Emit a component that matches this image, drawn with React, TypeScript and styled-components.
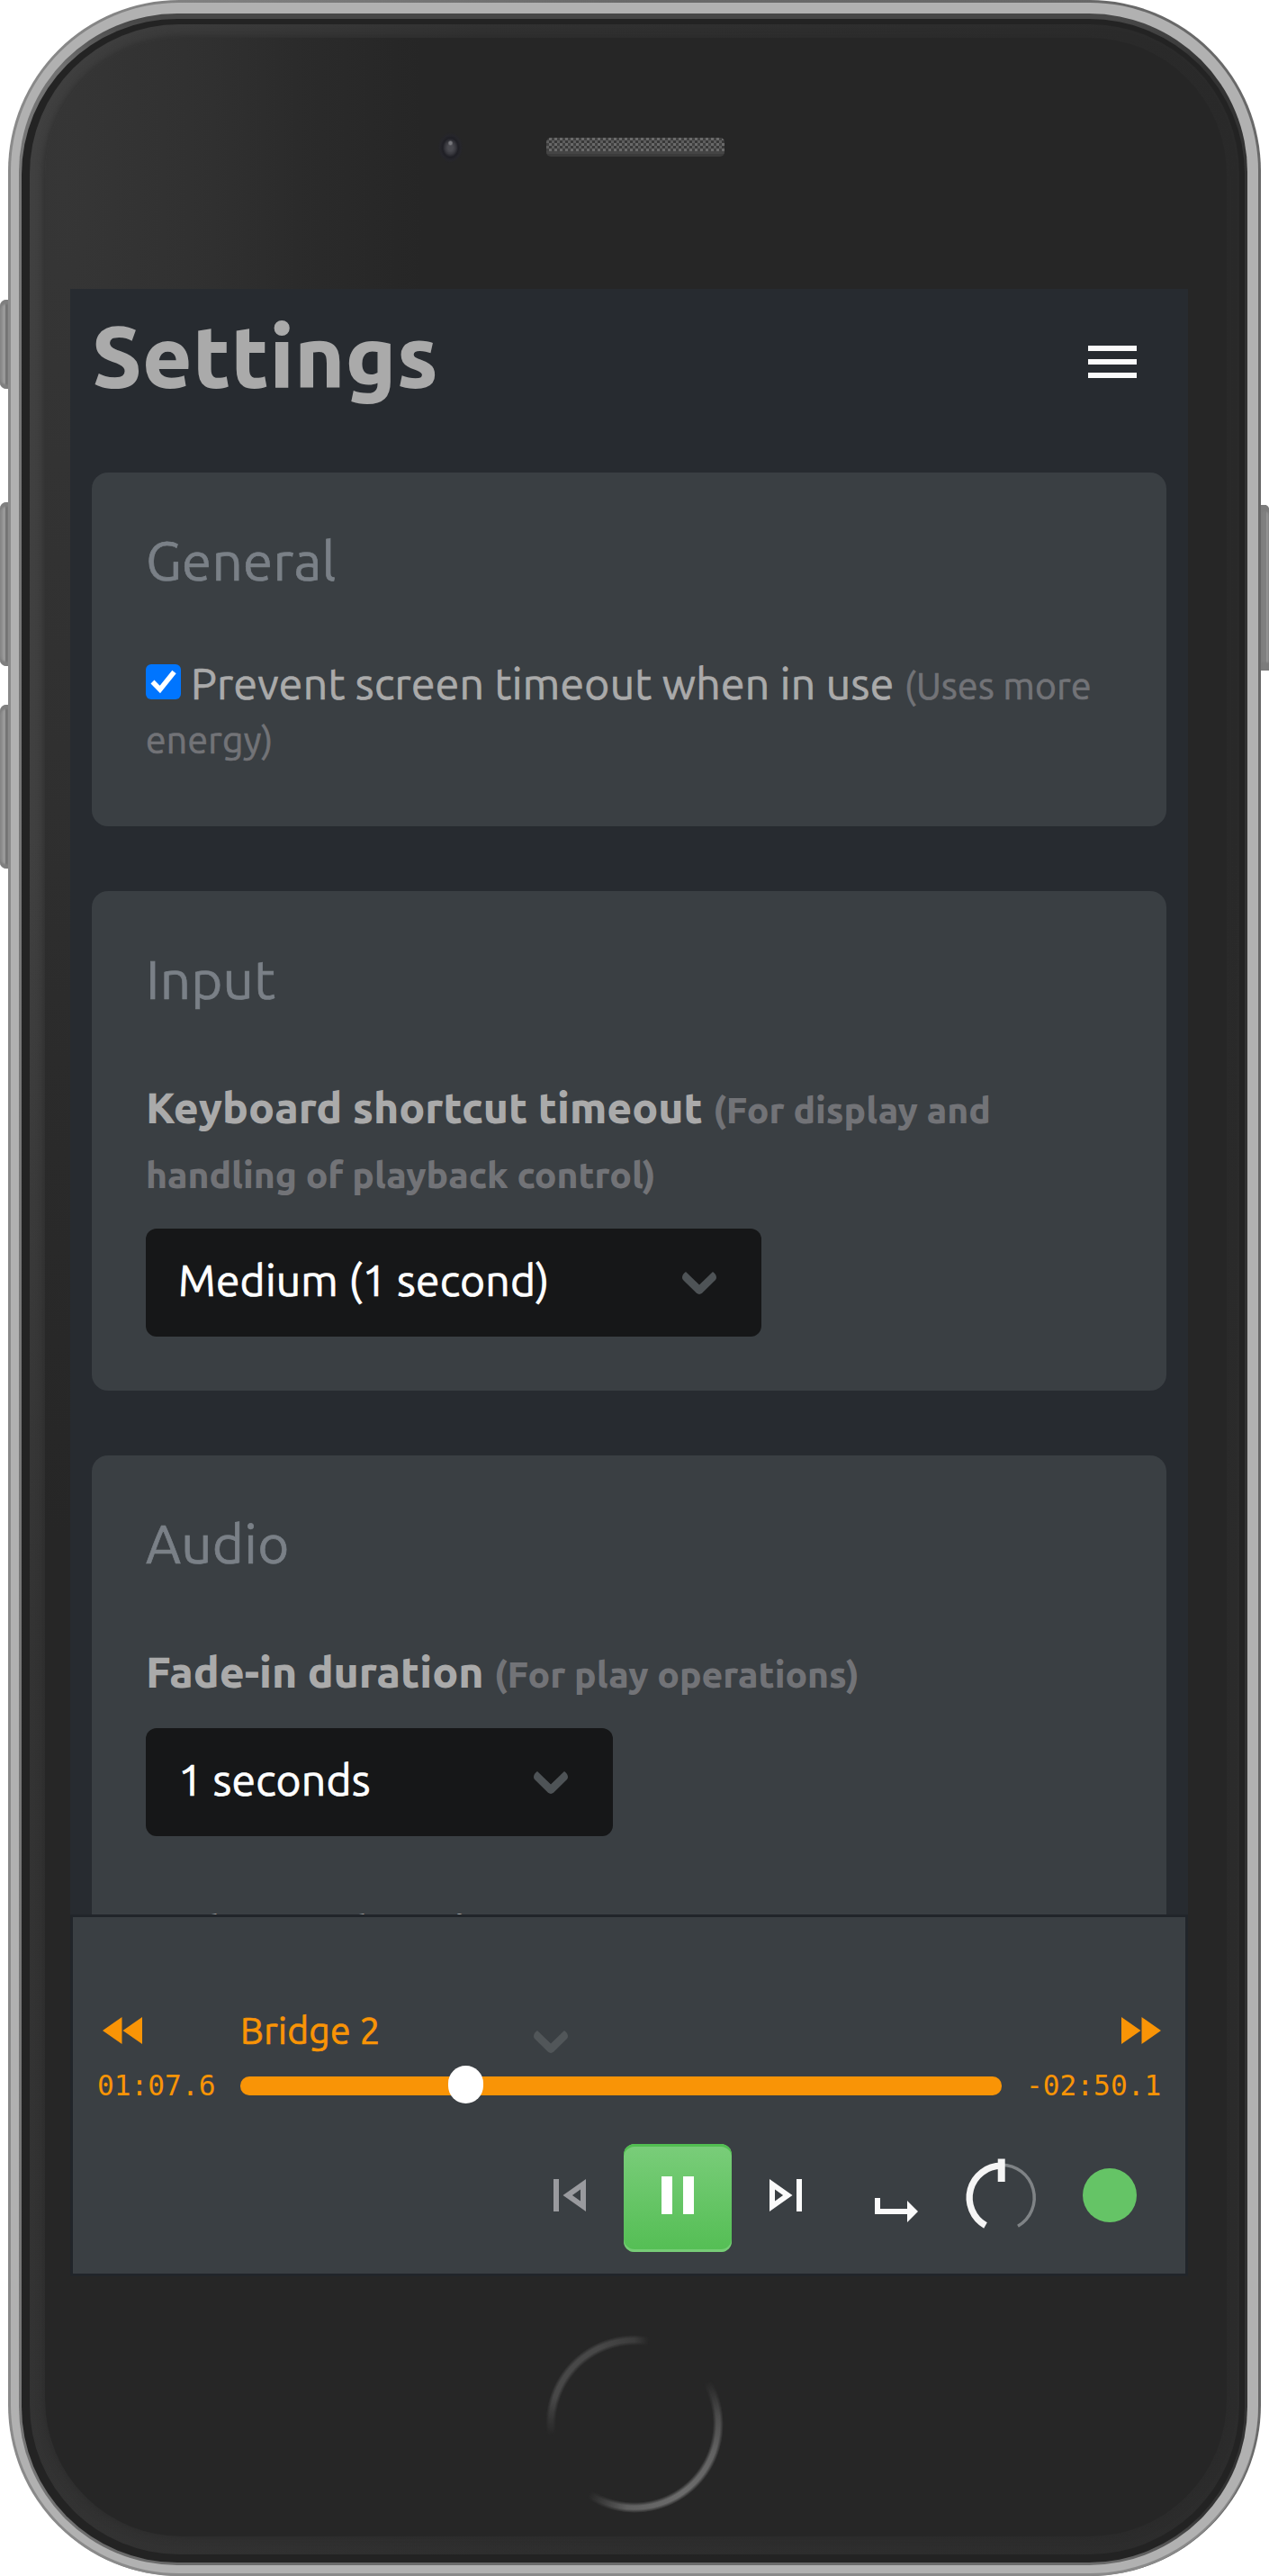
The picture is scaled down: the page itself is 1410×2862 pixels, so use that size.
import React from 'react';
import styled, { createGlobalStyle, css } from 'styled-components';

const uiFont = "Ubuntu, 'Noto Sans', 'Open Sans', sans-serif";
const orange = '#f99406';
const panel = '#3a3f43';

const GlobalStyle = createGlobalStyle`
  *, *::before, *::after { box-sizing: border-box; }
  body { margin: 0; background: #fff; }
`;

/* ---------- device ---------- */

const Stage = styled.div`
  display: grid;
  grid-template-columns: 9px 1392px 9px;
  width: 1410px;
  height: 2862px;
  overflow: hidden;
`;

const SideRail = styled.div<{ $top: number }>`
  display: flex;
  flex-direction: column;
  padding-top: ${(p) => p.$top}px;
`;

const SideButton = styled.div<{ $height: number; $before?: number; $side: 'left' | 'right' }>`
  height: ${(p) => p.$height}px;
  margin-top: ${(p) => p.$before ?? 0}px;
  ${(p) =>
    p.$side === 'left'
      ? css`
          border-radius: 7px 0 0 7px;
          background: linear-gradient(90deg, #8f8f8f 0 3px, #999 3px 6px, #747474 6px);
          box-shadow: inset 0 5px 2px #7f7f7f, inset 0 -5px 2px #7f7f7f;
        `
      : css`
          border-radius: 0 5px 0 0;
          background: linear-gradient(90deg, #808080 0 6px, #949494 6px);
          box-shadow: inset 0 7px 2px #7c7c7c, inset 0 -9px 2px #7c7c7c;
        `}
`;

const Edge = styled.div`
  height: 2862px;
  padding: 3px;
  border-radius: 190px;
  background: linear-gradient(90deg, #8a8a8a 0 3px, #696969 50%, #686868);
`;

const Metal = styled.div`
  height: 2856px;
  padding: 12px 12px 9px 9px;
  border-radius: 187px;
  background: #b1b1b1;
  box-shadow: 0 3px 0 #8a8a8a;
`;

const Lip = styled.div`
  height: 2835px;
  padding: 6px 3px 3px 3px;
  border-radius: 176px;
  background: linear-gradient(180deg, #474747 0, #474747 6px, transparent 60px, transparent 2780px, #6a6a6a 2832px),
    linear-gradient(90deg, #767676, #333 60%);
`;

const Glass = styled.div`
  height: 2826px;
  padding: 6px 6px 9px 9px;
  border-radius: 173px;
  background: #232323;
`;

const Rim = styled.div`
  height: 2811px;
  padding: 15px 14px 20px 17px;
  border-radius: 166px;
  background: linear-gradient(180deg, transparent 900px, rgba(45, 45, 45, 0.7) 1800px),
    linear-gradient(90deg, #404040 0, #313131 500px, #2a2a2a 100%);
`;

const Face = styled.div`
  display: flex;
  flex-direction: column;
  height: 2776px;
  border-radius: 152px;
  background: radial-gradient(ellipse 400px 1500px at 20px 160px, #363636 0, #303030 42%, #2b2b2b 65%, #262626 100%);
  box-shadow: 0 0 8px 1px rgba(42, 42, 42, 0.9);
`;

const TopBezel = styled.div`
  display: flex;
  align-items: center;
  gap: 91px;
  height: 279px;
  padding: 0 0 36px 435px;
`;

const Camera = styled.div`
  width: 31px;
  height: 42px;
  border-radius: 50%;
  background: radial-gradient(circle at 50% 38%, #77777c 0 1.5px, transparent 3px),
    radial-gradient(ellipse 14px 17px at 50% 50%, #4a4a50 0 20%, #38383e 42%, #1f1f25 62%, #26262b 82%, transparent 100%);
`;

const Earpiece = styled.div`
  width: 198px;
  height: 21px;
  border-radius: 5px;
  background: linear-gradient(180deg, transparent 15px, #454545 15px 18px, #3b3b3b 18px),
    conic-gradient(#6a6a6a 25%, #383838 0 50%, #5d5d5d 0 75%, #404040 0) 0 0 / 6px 6px;
`;

const BottomBezel = styled.div`
  display: flex;
  justify-content: center;
  padding: 65px 3px 0 0;
`;

const HomeButton = styled.div`
  width: 198px;
  height: 198px;
  border-radius: 50%;
  background: conic-gradient(
    #3c3c3c 0deg,
    transparent 10deg 60deg,
    #4c4c4c 85deg,
    #626262 110deg,
    #6c6c6c 145deg,
    #606060 185deg,
    transparent 213deg 262deg,
    #484848 288deg,
    #484848 335deg,
    #3c3c3c 360deg
  );
  mask: radial-gradient(circle, transparent 87px, #000 91px 95px, transparent 99px);
`;

/* ---------- app ---------- */

const Screen = styled.main`
  position: relative;
  flex: none;
  width: 1242px;
  height: 2208px;
  margin-left: 28px;
  padding: 0 24px;
  overflow: hidden;
  background: #272b30;
  color: #aaa;
  font: 400 48px/60px ${uiFont};
  letter-spacing: 0.3px;
  -webkit-text-stroke: 0.7px;
`;

const Header = styled.header`
  display: flex;
  align-items: center;
  justify-content: space-between;
  height: 204px;
  padding-right: 33px;
`;

const Title = styled.h1`
  margin: 0 0 54px;
  font-size: 96px;
  line-height: 144px;
  font-weight: 800;
  letter-spacing: 0;
  -webkit-text-stroke: 0;
`;

const MenuButton = styled.button`
  display: grid;
  gap: 9px;
  width: 54px;
  margin: 0 0 42px;
  padding: 0;
  border: 0;
  background: none;
`;

const MenuBar = styled.span`
  height: 6px;
  background: #fafafa;
`;

const Sections = styled.div`
  display: grid;
  gap: 72px;
`;

const Card = styled.section`
  padding: 53px 60px 60px;
  border-radius: 18px;
  background: ${panel};
`;

const CardTitle = styled.h2`
  margin: 0 0 61px;
  color: #7a8087;
  font-size: 60px;
  line-height: 90px;
  font-weight: 400;
`;

const CheckLabel = styled.label`
  display: block;
  margin-bottom: 9px;
`;

const CheckBox = styled.svg`
  width: 39px;
  height: 39px;
  margin-right: 11px;
  vertical-align: 0;
`;

const Hint = styled.small`
  color: #727377;
  font-size: 40.8px;
  line-height: 1;
`;

const Label = styled.label`
  display: block;
  margin-bottom: 27px;
  font-weight: 800;
  line-height: 72px;
  letter-spacing: -0.04px;
  -webkit-text-stroke: 0;
`;

const Field = styled.div`
  & + & { margin-top: 69px; }
`;

const SelectBox = styled.div<{ $width: number }>`
  display: flex;
  align-items: center;
  justify-content: space-between;
  width: ${(p) => p.$width}px;
  height: 120px;
  padding: 0 50px 0 36px;
  border-radius: 12px;
  background: #161718;
  color: #fff;
`;

const SelectValue = styled.span`
  flex: 1;
  padding-bottom: 6px;
  letter-spacing: 0.2px;
`;

const ChevronSvg = styled.svg`
  position: relative;
  z-index: 2;
  width: 38px;
  height: 25px;
  fill: #53585b;
  opacity: 0.93;
`;

/* ---------- player ---------- */

const Player = styled.footer`
  position: absolute;
  z-index: 1;
  left: 0;
  right: 0;
  bottom: 0;
  height: 402px;
  padding: 102px 27px 0;
  border: 3px solid #21252a;
  background: ${panel};
`;

const Timeline = styled.div`
  display: grid;
  grid-template-columns: 132px 846px 150px;
  grid-template-rows: 48px 37px;
  gap: 19px 27px;
  align-items: center;
  color: ${orange};
`;

const SeekIcon = styled.svg<{ $end?: boolean }>`
  width: 44px;
  height: 30px;
  fill: ${orange};
  justify-self: ${(p) => (p.$end ? 'end' : 'start')};
  margin-left: ${(p) => (p.$end ? 0 : 6)}px;
`;

const SectionName = styled.span`
  font-size: 40.8px;
  line-height: 48px;
`;

const Time = styled.span`
  font: 31.2px/37px 'DejaVu Sans Mono', monospace;
  letter-spacing: 0;
  white-space: nowrap;
  -webkit-text-stroke: 0;
`;

const Track = styled.div`
  display: flex;
  align-items: center;
  height: 21px;
  padding-left: 231px;
  border-radius: 10px;
  background: ${orange};
`;

const Thumb = styled.span`
  width: 39px;
  height: 42px;
  margin-bottom: 3px;
  border-radius: 19.5px;
  background: #fff;
`;

const Controls = styled.div`
  display: flex;
  justify-content: flex-end;
  margin: 46px -3px 0 0;
`;

const ControlButton = styled.button<{ $primary?: boolean; $dim?: boolean }>`
  display: flex;
  align-items: center;
  justify-content: center;
  width: 120px;
  height: 120px;
  padding: 0 0 6px;
  border: 0;
  background: none;
  color: ${(p) => (p.$dim ? '#999a9e' : '#fafafa')};
  ${(p) =>
    p.$primary &&
    css`
      border-radius: 12px;
      background: linear-gradient(#7acd7a, #54be54);
      box-shadow: inset 0 3px #52be52, inset 0 -3px #77cc77;
      color: #fff;
    `}
`;

const Icon = styled.svg`
  flex: none;
  width: 72px;
  height: 72px;
  fill: currentColor;
`;

const DialIcon = styled.svg`
  flex: none;
  width: 90px;
  height: 90px;
  fill: none;
`;

const StatusDot = styled.span`
  width: 60px;
  height: 60px;
  border-radius: 50%;
  background: #65c466;
`;

function Chevron() {
  return (
    <ChevronSvg viewBox="0 0 38 25">
      <path d="M4 0L19 14.5 34 0C38 3 39 6.5 37 9L22 23.8Q19 26 16 23.8L1 9C-1 6.5 0 3 4 0Z" />
    </ChevronSvg>
  );
}

function Select({ width, children }: { width: number; children?: React.ReactNode }) {
  return (
    <SelectBox $width={width}>
      <SelectValue>{children}</SelectValue>
      <Chevron />
    </SelectBox>
  );
}

function PlayerBar() {
  return (
    <Player>
      <Timeline>
        <SeekIcon viewBox="0 0 44 30">
          <path d="M21.5 0V30L0 15ZM44 0V30L22.5 15Z" />
        </SeekIcon>
        <SectionName>Bridge 2</SectionName>
        <SeekIcon $end viewBox="0 0 44 30">
          <path d="M0 0V30L21.5 15ZM22.5 0V30L44 15Z" />
        </SeekIcon>
        <Time>01:07.6</Time>
        <Track>
          <Thumb />
        </Track>
        <Time>-02:50.1</Time>
      </Timeline>
      <Controls>
        <ControlButton $dim aria-label="Previous">
          <Icon viewBox="0 0 24 24">
            <path fillRule="evenodd" d="M6 6h2v12H6zM9.5 12l8.5 6V6zM16 14.14L12.97 12 16 9.86z" />
          </Icon>
        </ControlButton>
        <ControlButton $primary aria-label="Pause">
          <Icon viewBox="0 0 24 24">
            <path d="M6 5h4v14H6zM14 5h4v14h-4z" />
          </Icon>
        </ControlButton>
        <ControlButton aria-label="Next">
          <Icon viewBox="0 0 24 24">
            <path fillRule="evenodd" d="M6 18l8.5-6L6 6zM8 9.86L11.03 12 8 14.14zM16 6h2v12h-2z" />
          </Icon>
        </ControlButton>
        <ControlButton aria-label="Continue">
          <Icon viewBox="0 0 24 24">
            <path d="M5 13h2v4h10v-3l4 4-4 4v-3H5z" />
          </Icon>
        </ControlButton>
        <ControlButton aria-label="Volume">
          <DialIcon viewBox="0 0 90 90">
            <path d="M44.7 11.2A36.5 36.5 0 0 1 63 79.3" stroke="#7f8386" strokeWidth="3.5" />
            <path d="M44.7 12.2A35.5 35.5 0 0 0 27 78.5" stroke="#f5f5f5" strokeWidth="7.3" />
            <path d="M44.7 4.5V30" stroke="#f5f5f5" strokeWidth="8" />
          </DialIcon>
        </ControlButton>
        <ControlButton aria-label="Status">
          <StatusDot />
        </ControlButton>
      </Controls>
    </Player>
  );
}

function SettingsScreen() {
  return (
    <Screen>
      <Header>
        <Title>Settings</Title>
        <MenuButton aria-label="Menu">
          <MenuBar />
          <MenuBar />
          <MenuBar />
        </MenuButton>
      </Header>
      <Sections>
        <Card>
          <CardTitle>General</CardTitle>
          <CheckLabel>
            <CheckBox viewBox="0 0 39 39">
              <rect width="39" height="39" rx="6" fill="#0075ff" />
              <path d="M7.5 19.5L15.8 28 31.5 8.5" fill="none" stroke="#fff" strokeWidth="5.6" />
            </CheckBox>
            Prevent screen timeout when in use <Hint>(Uses more energy)</Hint>
          </CheckLabel>
        </Card>
        <Card>
          <CardTitle>Input</CardTitle>
          <Field>
            <Label>
              Keyboard shortcut timeout <Hint>(For display and handling of playback control)</Hint>
            </Label>
            <Select width={684}>Medium (1 second)</Select>
          </Field>
        </Card>
        <Card>
          <CardTitle>Audio</CardTitle>
          <Field>
            <Label>
              Fade-in duration <Hint>(For play operations)</Hint>
            </Label>
            <Select width={519}>1 seconds</Select>
          </Field>
          <Field>
            <Label>Fade-out duration</Label>
            <Select width={519} />
          </Field>
        </Card>
      </Sections>
      <PlayerBar />
    </Screen>
  );
}

export default function App() {
  return (
    <>
      <GlobalStyle />
      <Stage>
        <SideRail $top={333}>
          <SideButton $side="left" $height={99} />
          <SideButton $side="left" $height={182} $before={126} />
          <SideButton $side="left" $height={182} $before={43} />
        </SideRail>
        <Edge>
          <Metal>
            <Lip>
              <Glass>
                <Rim>
                  <Face>
                    <TopBezel>
                      <Camera />
                      <Earpiece />
                    </TopBezel>
                    <SettingsScreen />
                    <BottomBezel>
                      <HomeButton />
                    </BottomBezel>
                  </Face>
                </Rim>
              </Glass>
            </Lip>
          </Metal>
        </Edge>
        <SideRail $top={561}>
          <SideButton $side="right" $height={184} />
        </SideRail>
      </Stage>
    </>
  );
}
